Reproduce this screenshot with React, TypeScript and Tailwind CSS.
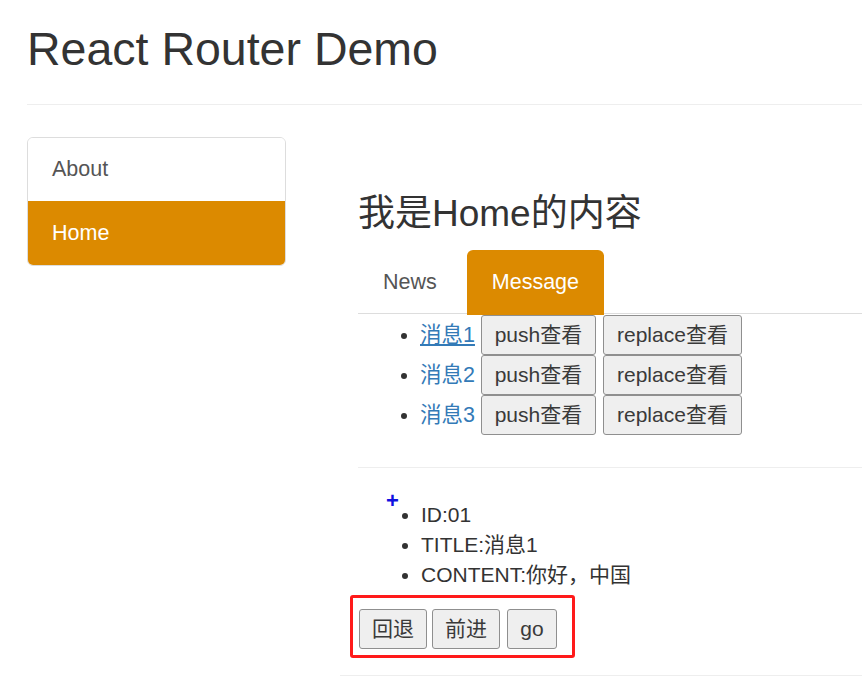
import React from 'react';

const messages = [
  { id: '01', title: '消息1' },
  { id: '02', title: '消息2' },
  { id: '03', title: '消息3' },
];

function Btn({ children, className = '' }: { children: React.ReactNode; className?: string }) {
  return (
    <button
      className={`h-[40px] flex items-center justify-center border border-[#8f8f8f] rounded-[3px] bg-[#efefef] text-[21px] text-[#3a3a3a] ${className}`}
    >
      {children}
    </button>
  );
}

export default function App() {
  return (
    <div
      className="min-h-[681px] bg-white text-[#333] pl-[27px] overflow-hidden"
      style={{ fontFamily: '"Liberation Sans", "Noto Sans CJK SC", sans-serif' }}
    >
      {/* page header */}
      <div className="pb-[30px] border-b border-[#eee]">
        <h2 className="pt-[24px] text-[46.5px] leading-[50px] text-[#333]">React Router Demo</h2>
      </div>

      <div className="flex gap-[72px] pt-[32px]">
        {/* sidebar */}
        <div className="w-[259px] shrink-0 self-start border border-[#ddd] rounded-[6px] overflow-hidden text-[21.5px]">
          <div className="h-[63px] flex items-center px-[24px] text-[#555] bg-white">About</div>
          <div className="h-[64px] flex items-center px-[24px] text-white bg-[#dc8a00]">Home</div>
        </div>

        {/* content */}
        <div className="flex-1 min-w-0">
          <h3 className="mt-[57px] text-[37px] leading-[40px] text-[#333]">我是Home的内容</h3>

          <div className="mt-[16px] flex border-b border-[#ddd] h-[64px] text-[21.5px]">
            <div className="h-[64px] flex items-center px-[25px] mr-[5px] text-[#555]">News</div>
            <div className="h-[65px] flex items-center px-[25px] text-white bg-[#dc8a00] rounded-t-[6px]">Message</div>
          </div>

          {/* message list */}
          <ul className="list-disc pl-[62px] text-[21.5px] pt-[1px]">
            {messages.map((m, i) => (
              <li key={m.id} className="h-[40px]">
                <div className="flex items-center gap-[6px] h-[40px]">
                  <a href="#" className={`text-[#337ab7] ${i === 0 ? 'underline' : ''}`}>{m.title}</a>
                  <Btn className="w-[115px]">push查看</Btn>
                  <Btn className="w-[139px] ml-[1px]">replace查看</Btn>
                </div>
              </li>
            ))}
          </ul>

          <div className="mt-[32px] border-t border-[#eee]" />

          {/* detail */}
          <ul className="relative list-disc pl-[63px] mt-[32px] text-[21px] leading-[30px]">
            <span className="absolute left-[28px] top-[-10px] text-[#1010e0] text-[22px] font-bold leading-[22px]">+</span>
            <li>ID:01</li>
            <li>TITLE:消息1</li>
            <li>CONTENT:你好，中国</li>
          </ul>

          <div className="ml-[-8px] mt-[5px] w-[225px] h-[63px] border-[3px] border-[#ff1a1a] rounded-[3px] pl-[6px] pt-[11px] flex gap-[5px] items-start">
            <Btn className="w-[68px] h-[39px]">回退</Btn>
            <Btn className="w-[68px] h-[39px]">前进</Btn>
            <Btn className="w-[50px] h-[39px] ml-[2px]">go</Btn>
          </div>

          <div className="mt-[17px] ml-[-18px] border-t border-[#eee]" />
        </div>
      </div>
    </div>
  );
}
